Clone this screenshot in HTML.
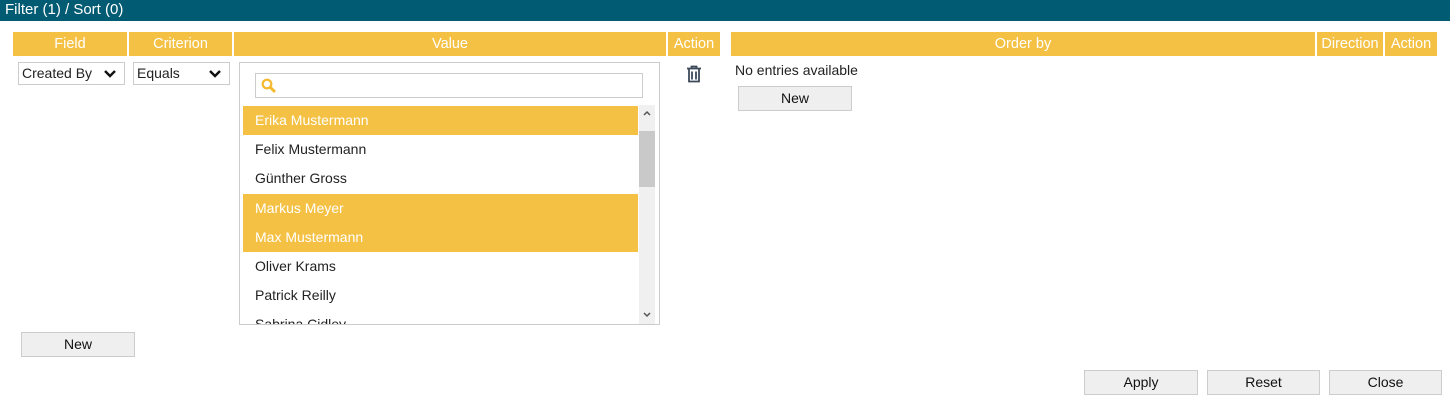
<!DOCTYPE html><html><head><style>
*{box-sizing:border-box;margin:0;padding:0}
body{width:1450px;height:412px;background:#fff;font-family:"Liberation Sans",sans-serif;font-size:14px;color:#222;position:relative;overflow:hidden}
.a{position:absolute}
.bar{left:0;top:0;width:1450px;height:21px;background:#015b72;color:#fff;padding:1px 5px;font-size:15px}
.h{background:#f4c144;color:#fff;text-align:center;height:24px;line-height:24px;top:32px;font-size:14.5px}
.sel{border:1px solid #ccc;height:23px;line-height:21px;padding-left:3px;background:#fff}
.sel svg{position:absolute;right:8px;top:6px}
.btn{background:#efefef;border:1px solid #ccc;text-align:center;height:25px;line-height:23px;color:#111}
.it{left:243px;width:395px;height:29px;line-height:29px;padding-left:12px}
.y{background:#f4c144;color:#fff}
</style></head><body>
<div class="a bar">Filter (1) / Sort (0)</div>
<div class="a h" style="left:13px;width:114px">Field</div>
<div class="a h" style="left:129px;width:103px">Criterion</div>
<div class="a h" style="left:234px;width:432px">Value</div>
<div class="a h" style="left:668px;width:52px">Action</div>
<div class="a h" style="left:731px;width:584px">Order by</div>
<div class="a h" style="left:1317px;width:66px">Direction</div>
<div class="a h" style="left:1385px;width:52px">Action</div>
<div class="a sel" style="left:18px;top:62px;width:107px">Created By<svg width="12" height="9" viewBox="0 0 12 9"><path d="M1 2l5 5 5-5" stroke="#111" stroke-width="2.4" fill="none"/></svg></div>
<div class="a sel" style="left:133px;top:62px;width:97px">Equals<svg width="12" height="9" viewBox="0 0 12 9"><path d="M1 2l5 5 5-5" stroke="#111" stroke-width="2.4" fill="none"/></svg></div>
<div class="a" style="left:239px;top:62px;width:421px;height:263px;border:1px solid #ccc"></div>
<div class="a" style="left:255px;top:73px;width:388px;height:25px;border:1px solid #ccc"><svg class="a" style="left:5px;top:4px" width="16" height="16" viewBox="0 0 16 16"><circle cx="6" cy="6" r="4.3" stroke="#f4b92e" stroke-width="2.2" fill="none"/><path d="M9 9l5 5" stroke="#f4b92e" stroke-width="3"/></svg></div>
<div class="a it y" style="top:106px">Erika Mustermann</div>
<div class="a it" style="top:135px">Felix Mustermann</div>
<div class="a it" style="top:164px">Günther Gross</div>
<div class="a it y" style="top:194px">Markus Meyer</div>
<div class="a it y" style="top:223px">Max Mustermann</div>
<div class="a it" style="top:252px">Oliver Krams</div>
<div class="a it" style="top:281px">Patrick Reilly</div>
<div class="a it" style="top:310px;height:14px;overflow:hidden">Sabrina Cidley</div>
<div class="a" style="left:639px;top:105px;width:16px;height:219px;background:#f0f0f0"></div>
<div class="a" style="left:639px;top:131px;width:16px;height:56px;background:#c9c9c9"></div>
<svg class="a" style="left:642px;top:109px" width="10" height="8"><path d="M2 6l3-3 3 3" stroke="#555" stroke-width="1.5" fill="none"/></svg>
<svg class="a" style="left:642px;top:311px" width="10" height="8"><path d="M2 2l3 3 3-3" stroke="#555" stroke-width="1.5" fill="none"/></svg>
<svg class="a" style="left:686px;top:65px" width="16" height="18" viewBox="0 0 16 18"><path d="M1 3.5h14M5.5 3V1.5h5V3M3 4v12.5h10V4M6 6.5v8M10 6.5v8" stroke="#3d4a5a" stroke-width="1.8" fill="none"/></svg>
<div class="a" style="left:735px;top:62px">No entries available</div>
<div class="a btn" style="left:738px;top:86px;width:114px">New</div>
<div class="a btn" style="left:21px;top:332px;width:114px">New</div>
<div class="a btn" style="left:1084px;top:370px;width:114px">Apply</div>
<div class="a btn" style="left:1207px;top:370px;width:113px">Reset</div>
<div class="a btn" style="left:1329px;top:370px;width:113px">Close</div>
</body></html>
